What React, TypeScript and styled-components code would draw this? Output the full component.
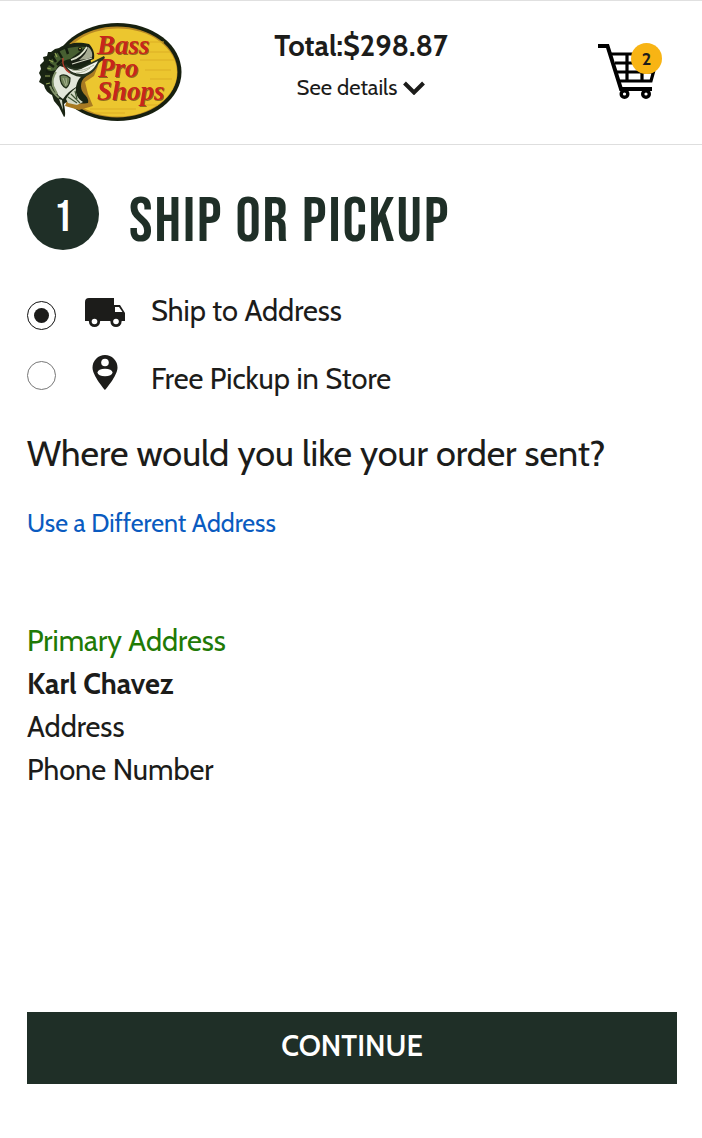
import React, { useState } from 'react';
import styled, { createGlobalStyle } from 'styled-components';

const ink = '#1c1c1a';
const forest = '#1f2f27';

const GlobalStyle = createGlobalStyle`
  *, *::before, *::after { box-sizing: border-box; }
  body {
    margin: 0;
    background: #fff;
    color: ${ink};
    font-family: Cabin, Lato, "Liberation Sans", sans-serif;
  }
  h1, h2, p { margin: 0; }
  button, input { font: inherit; color: inherit; }
`;

const Page = styled.div`
  min-height: 100vh;
  display: flex;
  flex-direction: column;
  border-top: 1px solid #e0e0e0;
`;

const Header = styled.header`
  display: grid;
  grid-template-columns: 1fr auto 1fr;
  align-items: start;
  height: 144px;
  padding: 20px 40px 0 36px;
  border-bottom: 1px solid #dedede;
`;

const LogoLink = styled.a`
  display: block;
  width: 148px;
  height: 102px;
`;

const Summary = styled.div`
  display: flex;
  flex-direction: column;
  align-items: center;
  padding: 5px 0 0 24px;
`;

const Total = styled.p`
  font-size: 29px;
  line-height: 40px;
  font-weight: 700;
`;

const DetailsButton = styled.button`
  display: flex;
  align-items: center;
  gap: 6px;
  padding: 0;
  border: 0;
  background: none;
  font-size: 22px;
  line-height: 44px;
  cursor: pointer;
`;

const CartLink = styled.a`
  position: relative;
  justify-self: end;
  display: block;
  width: 64px;
  height: 60px;
  margin-top: 22px;
  color: #000;
  text-decoration: none;
`;

const Badge = styled.span`
  position: absolute;
  top: 0;
  right: 0;
  width: 31px;
  height: 31px;
  border-radius: 50%;
  background: #f8b414;
  color: ${ink};
  font-size: 18px;
  line-height: 32px;
  font-weight: 700;
  text-align: center;
`;

const Main = styled.main`
  flex: 1;
  display: flex;
  flex-direction: column;
  align-items: stretch;
  padding: 33px 25px 54px 27px;
`;

const StepHeading = styled.div`
  display: flex;
  align-items: center;
  gap: 30px;
  height: 72px;
`;

const condensed = '"Bebas Neue", "Liberation Sans Narrow", "Roboto Condensed", "Liberation Sans", sans-serif';

const StepNumber = styled.span`
  flex: none;
  width: 72px;
  height: 72px;
  border-radius: 50%;
  background: ${forest};
  color: #fff;
  font-family: ${condensed};
  font-size: 44px;
  line-height: 80px;
  font-weight: 400;
  text-align: center;
`;

const StepTitle = styled.h1`
  padding-top: 16px;
  color: ${forest};
  font-family: ${condensed};
  font-size: 63px;
  line-height: 64px;
  font-weight: 400;
  letter-spacing: 2px;
  text-transform: uppercase;
  white-space: nowrap;
`;

const Options = styled.fieldset`
  display: flex;
  flex-direction: column;
  gap: 18px;
  margin: 44px 0 0;
  padding: 0;
  border: 0;
`;

const Option = styled.label`
  display: flex;
  align-items: flex-start;
  height: 42px;
  cursor: pointer;
`;

const Radio = styled.input`
  appearance: none;
  align-self: center;
  flex: none;
  display: grid;
  place-items: center;
  width: 29px;
  height: 29px;
  margin: 0 29px 0 0;
  border: 1px solid #777;
  border-radius: 50%;
  background: #fff;

  &:checked { border-color: #111; }
  &:checked::before {
    content: '';
    width: 15px;
    height: 15px;
    border-radius: 50%;
    background: ${ink};
  }
`;

const OptionText = styled.span<{ $low?: boolean }>`
  align-self: ${(p) => (p.$low ? 'flex-end' : 'flex-start')};
  margin-left: 26px;
  font-size: 29px;
  line-height: 34px;
`;

const Question = styled.h2`
  margin-top: 37px;
  font-size: 36px;
  line-height: 40px;
  font-weight: 400;
`;

const AddressLink = styled.a`
  align-self: flex-start;
  margin-top: 34px;
  color: #0a5bc0;
  font-size: 25px;
  line-height: 32px;
  text-decoration: none;
`;

const AddressCard = styled.address`
  display: flex;
  flex-direction: column;
  margin: 80px 0 40px;
  font-style: normal;
  font-size: 29px;
  line-height: 43px;
`;

const Tag = styled.span`
  color: #1f7a06;
`;

const ContinueButton = styled.button`
  height: 72px;
  margin-top: auto;
  padding: 0 0 4px;
  border: 0;
  background: ${forest};
  color: #fff;
  font-size: 29px;
  line-height: 36px;
  font-weight: 600;
  text-transform: uppercase;
  cursor: pointer;
`;

const LogoWords = styled.g`
  font: italic 700 27px "Liberation Serif", serif;
  fill: #c8251b;
  filter: drop-shadow(1px 1px 0 #8f6a1d);
`;

const Logo = () => (
  <svg width="148" height="102" viewBox="36 21 148 102" role="img" aria-label="Bass Pro Shops">
    <ellipse cx="117.500" cy="72" rx="64" ry="49" fill="#17200f" />
    <ellipse cx="117" cy="72" rx="60.500" ry="45.500" fill="#b98a25" />
    <ellipse cx="118" cy="72.500" rx="59" ry="44" fill="#ecc62f" />
    <path
      d="M150 42h14M147 52h23M140 60h34M145 70h26M150 79h22M90 109h46M95 113h30M140 105h18"
      stroke="#dcae25"
      strokeWidth="1"
      fill="none"
    />
    <LogoWords>
      <text x="97" y="54">Bass</text>
      <text x="98" y="77">Pro</text>
      <text x="97" y="100">Shops</text>
    </LogoWords>
    {/* shade that the fish casts on the oval */}
    <path d="M98 66l-4 10-9 6 3 12 5 12-14 4-14-4 10-30z" fill="#a87a22" />
    {/* back and tail */}
    <path
      d="M89 44c-6-1-13-2-18 0-5 0-9 2-12 4l-4 1-4 3-3 0-1 4-4 1 1 4-4 4 1 4-2 4 2 4-2 5 5 3c1 5 4 8 8 10l2 6 5 6 5 10c2 0 1-8 0-13l4-3c5 3 14 3 20 2 1-3-1-6-3-8-4-4-5-9-3-14 2-4 6-6 10-9l-2-18z"
      fill="#192413"
    />
    <path d="M86 47c-12-1-23 1-30 7-5 5-8 11-9 18l9-2c2-6 8-10 14-11z" fill="#475f31" />
    <path d="M58 51l4 7M66 48l2 6M52 56l4 6M48 63l6 4M46 71l7 2M45 79l6 0M62 60l-5 5" stroke="#141d0f" strokeWidth="2.500" />
    <path d="M49 60l4 2M47 68l4 1M45 76l5 0M46 84l4-1M55 53l2 4" stroke="#93a354" strokeWidth="1.200" />
    {/* pale flank and belly */}
    <path d="M60 66c-5 4-7 9-7 15 0 6 3 11 6 15l4 3c3-5 8-9 13-12 1-4 2-8 6-11l-7-5z" fill="#e2e6da" />
    <path d="M56 72c-3 4-4 9-3 14l4 8M50 86c2 5 5 9 9 12" stroke="#82926b" strokeWidth="2" fill="none" />
    <path d="M59 99l4 11-1-10z" fill="#cfd5c4" />
    {/* lower jaw */}
    <path d="M66 64c4 4 9 5 14 4l18-9 6-3 1 2-6 5c-3 7-8 12-16 14-9 0-17-5-19-11z" fill="#273320" />
    <path d="M67 67c5 4 11 4 16 1l15-7c-3 7-8 12-15 13-7 0-13-2-16-7z" fill="#f3f4ec" />
    <path d="M72 70c8 2 15-1 22-5M76 73c6 0 10-2 14-5" stroke="#a9b197" strokeWidth="1" fill="none" />
    {/* open mouth */}
    <path d="M89 44c4 4 6 9 5 15l-11 4-11 3-3-4c8-2 14-8 20-18z" fill="#1a2015" />
    <path d="M88 47c-1 5-4 9-9 13l8-1 5-2c1-4-1-8-4-10z" fill="#a7ac94" />
    <path d="M71 60c7-2 12-6 16-13" stroke="#dfe4cf" strokeWidth="1.800" fill="none" />
    <path d="M72 64l20-6" stroke="#d7dbc7" strokeWidth="1.300" />
    <path d="M63 58c-1 7 1 11 7 15" stroke="#b5382b" strokeWidth="1.400" fill="none" />
    {/* fins */}
    <path d="M60 76c3-2 7-1 10 2 0 4-1 8-4 10-4-2-6-6-6-12z" fill="#6f8058" stroke="#1d2a16" strokeWidth="1.200" />
    <path d="M63 78l3 8M66 78l1 7" stroke="#b4bf9d" strokeWidth="0.800" />
    <path d="M66 99c3-5 6-8 10-11-1 6 2 11 7 14l-6 3-9-2z" fill="#d3d9c6" />
    <path d="M71 94l9 9M68 97l9 6M75 91l2 8" stroke="#3d5231" strokeWidth="1.200" />
    <circle cx="80" cy="49" r="2" fill="#10150d" />
    <circle cx="80" cy="48.500" r="0.800" fill="#d5c95a" />
  </svg>
);

const Chevron = () => (
  <svg width="22" height="14" viewBox="0 0 22 14" aria-hidden="true">
    <path d="M1.500 2l9.500 9.500L20.500 2" fill="none" stroke={ink} strokeWidth="4" />
  </svg>
);

const Cart = () => (
  <svg width="64" height="60" viewBox="0 0 64 60" aria-hidden="true" fill="none" stroke="#000">
    <path d="M0 3H9.500L23 46H54" strokeWidth="4" />
    <path d="M13 11H50M17 20H48M19 29H54M21 38H53L56 27M29 11V38M44 11V38" strokeWidth="3.200" />
    <circle cx="26.500" cy="51" r="3.300" strokeWidth="3.400" />
    <circle cx="48" cy="51" r="3.300" strokeWidth="3.400" />
  </svg>
);

const Truck = () => (
  <svg width="40" height="36" viewBox="0 0 40 36" aria-hidden="true">
    <path
      fill={ink}
      fillRule="evenodd"
      d="M4 4H29V11H35L40 19V27H0V8a4 4 0 0 1 4-4zM30 13V18H37.500L34 13z"
    />
    <circle cx="9.500" cy="27.500" r="5.600" fill={ink} />
    <circle cx="31" cy="27.500" r="5.600" fill={ink} />
    <circle cx="9.500" cy="27.500" r="2.800" fill="#fff" />
    <circle cx="31" cy="27.500" r="2.800" fill="#fff" />
  </svg>
);

const Pin = () => (
  <svg width="40" height="36" viewBox="0 0 40 36" aria-hidden="true">
    <path fill={ink} d="M20 1a12.500 12.500 0 0 0-12.500 12.500C7.500 22 20 36 20 36s12.500-14 12.500-22.500A12.500 12.500 0 0 0 20 1z" />
    <circle cx="20" cy="8.500" r="3.800" fill="#fff" />
    <ellipse cx="20" cy="18.500" rx="7.500" ry="3.800" fill="#fff" />
  </svg>
);

export default function App() {
  const [method, setMethod] = useState('ship');

  return (
    <>
      <GlobalStyle />
      <Page>
        <Header>
          <LogoLink href="#home">
            <Logo />
          </LogoLink>
          <Summary>
            <Total>Total:$298.87</Total>
            <DetailsButton type="button">
              See details
              <Chevron />
            </DetailsButton>
          </Summary>
          <CartLink href="#cart" aria-label="Cart, 2 items">
            <Cart />
            <Badge>2</Badge>
          </CartLink>
        </Header>
        <Main>
          <StepHeading>
            <StepNumber>1</StepNumber>
            <StepTitle>Ship or Pickup</StepTitle>
          </StepHeading>
          <Options aria-label="Delivery method">
            <Option>
              <Radio type="radio" name="method" checked={method === 'ship'} onChange={() => setMethod('ship')} />
              <Truck />
              <OptionText>Ship to Address</OptionText>
            </Option>
            <Option>
              <Radio type="radio" name="method" checked={method === 'pickup'} onChange={() => setMethod('pickup')} />
              <Pin />
              <OptionText $low>Free Pickup in Store</OptionText>
            </Option>
          </Options>
          <Question>Where would you like your order sent?</Question>
          <AddressLink href="#different-address">Use a Different Address</AddressLink>
          <AddressCard>
            <Tag>Primary Address</Tag>
            <strong>Karl Chavez</strong>
            <span>Address</span>
            <span>Phone Number</span>
          </AddressCard>
          <ContinueButton type="button">Continue</ContinueButton>
        </Main>
      </Page>
    </>
  );
}
